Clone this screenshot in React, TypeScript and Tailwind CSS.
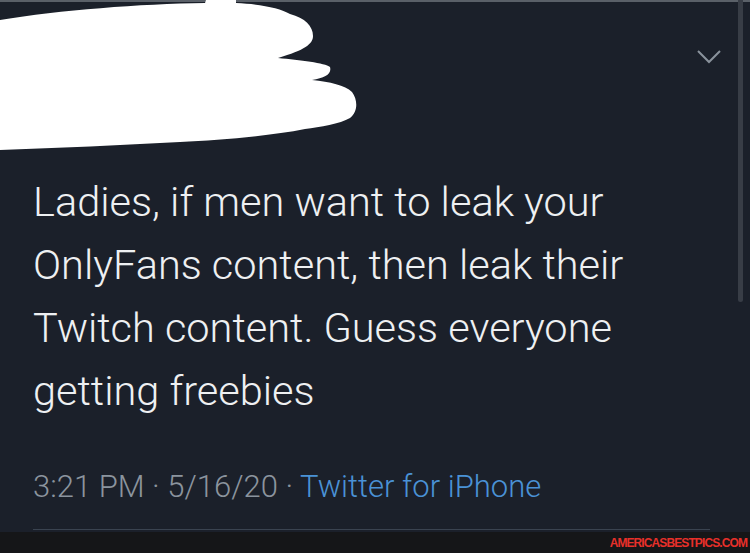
import React from "react";

export default function App() {
  return (
    <div className="relative w-[750px] h-[553px] overflow-hidden bg-[#1b202a] flex flex-col" style={{ fontFamily: "Roboto, 'Noto Sans', sans-serif" }}>
      <div className="h-[2px] bg-[#5a6068]" />
      <svg className="absolute left-0 top-0" width="370" height="160" viewBox="0 0 370 160">
        <path
          fill="#ffffff"
          d="M0 20 C60 10 140 4 205 3 L206 0 L236 0 L236 3 C260 4 280 8 290 14 C305 18 313 26 313 36 C313 44 305 50 278 58 C300 60 325 63 330 67 C332 74 325 78 312 80 C330 82 345 85 352 92 C358 100 358 112 350 118 C340 124 320 127 305 129 C270 136 220 140 180 142 C120 145 60 148 0 150 Z"
        />
      </svg>
      <svg className="absolute left-[696px] top-[49px]" width="26" height="16" viewBox="0 0 26 16">
        <path d="M2 2 L13 13 L24 2" fill="none" stroke="#8a929c" strokeWidth="2" />
      </svg>
      <div className="absolute left-[738px] top-0 w-[5px] h-[302px] bg-[#383d46] rounded-b" />
      <div className="pl-[33px] pt-[168px] text-[41.5px] leading-[63px] text-[#eef0f2] font-light">
        <div>Ladies, if men want to leak your</div>
        <div>OnlyFans content, then leak their</div>
        <div>Twitch content. Guess everyone</div>
        <div>getting freebies</div>
      </div>
      <div className="pl-[33px] mt-[48px] text-[31px] leading-[34px] font-light text-[#8b949e]">
        3:21 PM · 5/16/20 · <span className="text-[#4a92d6]">Twitter for iPhone</span>
      </div>
      <div className="mt-[25px] ml-[33px] w-[677px] h-px bg-[#3a4350]" />
      <div className="mt-auto h-[21px] bg-[#151618] flex items-center justify-end pr-[3px]">
        <span className="text-[#e8302a] text-[12px] font-bold tracking-[-0.9px]" style={{ fontFamily: "'Liberation Sans Narrow', 'Liberation Sans', Arial, sans-serif" }}>AMERICASBESTPICS.COM</span>
      </div>
    </div>
  );
}
